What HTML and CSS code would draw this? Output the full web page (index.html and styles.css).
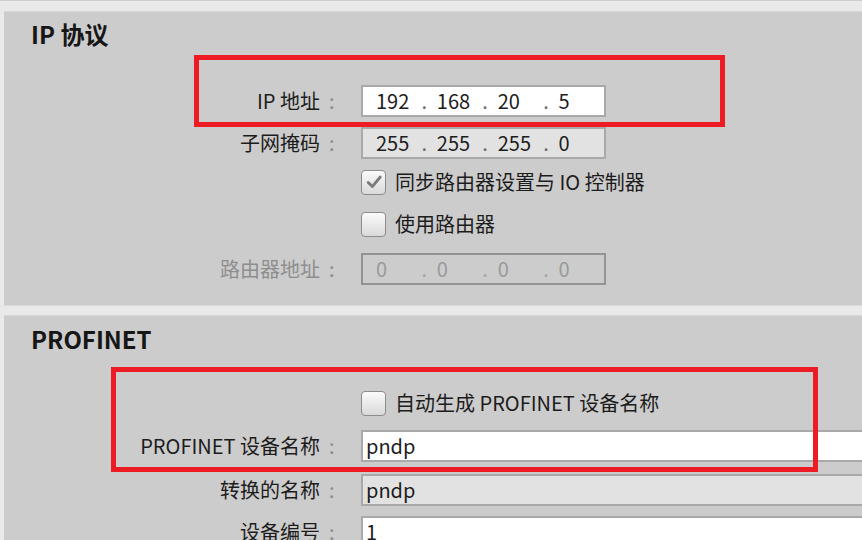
FILE: index.html
```html
<!DOCTYPE html>
<html lang="zh-CN">
<head>
<meta charset="utf-8">
<title>IP 协议 / PROFINET</title>
<link rel="stylesheet" href="styles.css">
</head>
<body>
<div class="screen">
  <section class="panel panel-ip">
    <h2 class="title">IP 协议</h2>
    <div class="form">
      <div class="row row-ip">
        <span class="label">IP 地址</span><span class="colon">:</span>
        <div class="field ip white">
          <span class="seg">192</span><span class="dot">.</span><span class="seg">168</span><span class="dot">.</span><span class="seg">20</span><span class="dot">.</span><span class="seg">5</span>
        </div>
      </div>
      <div class="row row-mask">
        <span class="label">子网掩码</span><span class="colon">:</span>
        <div class="field ip grey">
          <span class="seg">255</span><span class="dot">.</span><span class="seg">255</span><span class="dot">.</span><span class="seg">255</span><span class="dot">.</span><span class="seg">0</span>
        </div>
      </div>
      <div class="row row-check row-sync">
        <span class="label"></span><span class="colon"></span>
        <label class="check">
          <span class="box"><svg viewBox="0 0 24 24" width="20" height="20"><path d="M5 12.5 L10 17.5 L19.5 6" fill="none" stroke="#7b7b7b" stroke-width="3.4" stroke-linecap="round" stroke-linejoin="round"/></svg></span>
          <span class="check-text">同步路由器设置与 IO 控制器</span>
        </label>
      </div>
      <div class="row row-check row-use">
        <span class="label"></span><span class="colon"></span>
        <label class="check">
          <span class="box"></span>
          <span class="check-text">使用路由器</span>
        </label>
      </div>
      <div class="row row-router disabled">
        <span class="label">路由器地址</span><span class="colon">:</span>
        <div class="field ip off">
          <span class="seg">0</span><span class="dot">.</span><span class="seg">0</span><span class="dot">.</span><span class="seg">0</span><span class="dot">.</span><span class="seg">0</span>
        </div>
      </div>
    </div>
  </section>

  <section class="panel panel-pn">
    <h2 class="title">PROFINET</h2>
    <div class="form">
      <div class="row row-check row-auto">
        <span class="label"></span><span class="colon"></span>
        <label class="check">
          <span class="box"></span>
          <span class="check-text">自动生成 PROFINET 设备名称</span>
        </label>
      </div>
      <div class="row row-name">
        <span class="label">PROFINET 设备名称</span><span class="colon">:</span>
        <div class="field wide white">pndp</div>
      </div>
      <div class="row row-conv">
        <span class="label">转换的名称</span><span class="colon">:</span>
        <div class="field wide grey">pndp</div>
      </div>
      <div class="row row-num">
        <span class="label">设备编号</span><span class="colon">:</span>
        <div class="field wide white">1</div>
      </div>
    </div>
  </section>

  <div class="mark mark-ip"></div>
  <div class="mark mark-pn"></div>
</div>
</body>
</html>
```

FILE: styles.css
```css
html, body {
  margin: 0;
  padding: 0;
  height: 100%;
  overflow: hidden;
}

body {
  background: #e9e9e9;
  font-family: "Noto Sans CJK SC", "Liberation Sans", sans-serif;
  color: #1c1c1c;
}

.screen {
  position: relative;
  border-top: 1px solid #cdcdcd;
  padding-top: 10px;
  height: 100%;
  box-sizing: border-box;
}

.panel {
  margin-left: 4px;
  background: #cccccc;
  border-top: 1px solid #d8d8d8;
}

.panel-ip {
  padding-top: 8px;
  padding-bottom: 20px;
  border-bottom: 1px solid #dadada;
}

.panel-pn {
  margin-top: 9px;
  padding-top: 9px;
  height: 400px;
}

.title {
  margin: 0;
  padding-left: 27px;
  font-size: 24px;
  line-height: 28px;
  font-weight: bold;
  color: #161616;
}

.panel-ip .form {
  margin-top: 37px;
}

.panel-pn .form {
  margin-top: 36px;
}

.row {
  display: grid;
  grid-template-columns: 316px 41px 1fr;
  align-items: center;
  height: 32px;
  font-size: 20px;
  line-height: 26px;
}

.row-check {
  height: 28px;
}

.row-mask { margin-top: 10px; }
.row-sync { margin-top: 9px; }
.row-use { margin-top: 14px; }
.row-router { margin-top: 15px; }
.row-name { margin-top: 13px; }
.row-conv { margin-top: 12px; }
.row-num { margin-top: 10px; }

.label {
  text-align: right;
  white-space: nowrap;
}

.colon {
  padding-left: 9px;
  color: #8a8a8a;
}

.disabled .label {
  color: #8e8e8e;
}

.field {
  box-sizing: border-box;
  height: 32px;
  border: 2px solid #a9a9a9;
  display: flex;
  align-items: center;
  white-space: nowrap;
}

.white { background: #ffffff; }
.grey { background: #e2e2e2; }

.ip {
  width: 245px;
  padding-left: 13px;
}

.off {
  background: transparent;
  border-color: #939393;
  color: #9a9a9a;
}

.seg {
  display: inline-block;
  width: 47px;
}

.dot {
  display: inline-block;
  width: 16px;
  color: #6a6a6a;
}

.off .dot { color: #a4a4a4; }

.wide {
  width: 600px;
  padding-left: 3px;
}

.check {
  display: flex;
  align-items: center;
  gap: 9px;
  white-space: nowrap;
}

.box {
  box-sizing: border-box;
  width: 25px;
  height: 25px;
  border: 1.5px solid #8c8c8c;
  border-radius: 4px;
  background: linear-gradient(#fbfbfb, #d9d9d9);
  display: flex;
  align-items: center;
  justify-content: center;
}

.mark {
  position: absolute;
  box-sizing: border-box;
  border: 5px solid #ed1c24;
}

.mark-ip {
  left: 194px;
  top: 54px;
  width: 531px;
  height: 72px;
}

.mark-pn {
  left: 111px;
  top: 366px;
  width: 707px;
  height: 105px;
}
```
